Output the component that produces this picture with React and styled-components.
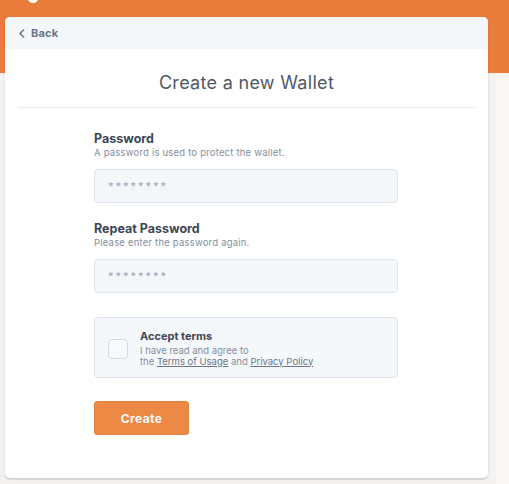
import styled, { createGlobalStyle } from 'styled-components';

const GlobalStyle = createGlobalStyle`
  html, body {
    margin: 0;
    padding: 0;
    background: #f6f4f2;
    font-family: Inter, "Noto Sans", sans-serif;
  }
`;

const Page = styled.div`
  position: relative;
  width: 509px;
  height: 484px;
  overflow: hidden;
  background: linear-gradient(to right, #f5f3f1 0, #f5f3f1 496px, #faf7f5 496px);
`;

const Banner = styled.div`
  height: 73px;
  background: #ea7c3b;
  position: relative;
`;

const LogoBit = styled.div`
  position: absolute;
  left: 28px;
  top: -6px;
  width: 10px;
  height: 9px;
  border-radius: 50%;
  background: #fff;
`;

const Card = styled.div`
  position: absolute;
  left: 5px;
  top: 17px;
  width: 483px;
  height: 461px;
  background: #fff;
  border-radius: 5px;
  box-shadow: 0 1px 3px rgba(0, 0, 0, 0.12), 0 2px 0 rgba(0, 0, 0, 0.06);
  overflow: hidden;
  display: flex;
  flex-direction: column;
`;

const TopBar = styled.div`
  height: 32px;
  flex-shrink: 0;
  background: #f4f7fa;
  display: flex;
  align-items: center;
  padding-left: 13px;
  gap: 5px;
  color: #6c7588;
  font-size: 11px;
  font-weight: 700;
  letter-spacing: 0.2px;
`;

const Title = styled.h1`
  margin: 0;
  height: 58px;
  flex-shrink: 0;
  display: flex;
  align-items: center;
  justify-content: center;
  font-size: 18px;
  font-weight: 400;
  color: #4f5868;
  letter-spacing: 0.3px;
  padding-top: 8px;
  box-sizing: border-box;
`;

const Divider = styled.hr`
  margin: 0 13px;
  border: none;
  border-top: 1px solid #e6e8eb;
`;

const Form = styled.div`
  width: 304px;
  margin-left: 89px;
  padding-top: 23px;
  display: flex;
  flex-direction: column;
`;

const Label = styled.div`
  font-size: 12.5px;
  font-weight: 700;
  color: #3e4656;
  line-height: 15px;
`;

const Help = styled.div`
  font-size: 9.5px;
  color: #858e9c;
  line-height: 13px;
  letter-spacing: 0.2px;
`;

const Input = styled.div`
  margin-top: 10px;
  margin-bottom: ${p => p.$mb || 0}px;
  height: 32px;
  border: 1px solid #dfe5ec;
  border-radius: 4px;
  background: #f4f7fa;
  display: flex;
  align-items: center;
  padding-left: 13px;
  color: #9ea6b2;
  font-size: 11px;
  letter-spacing: 2px;
`;

const Terms = styled.div`
  margin-top: 24px;
  height: 59px;
  border: 1px solid #dde3ea;
  border-radius: 4px;
  background: #f5f8fb;
  display: flex;
  align-items: center;
  padding-left: 13px;
  gap: 12px;
`;

const Check = styled.div`
  width: 18px;
  height: 18px;
  border: 1px solid #d2d9e1;
  border-radius: 4px;
  background: #f7f9fb;
  margin-top: 2px;
`;

const TermsText = styled.div`
  display: flex;
  flex-direction: column;
`;

const TermsTitle = styled.div`
  font-size: 11px;
  font-weight: 700;
  color: #3e4656;
  line-height: 14px;
`;

const TermsBody = styled.div`
  font-size: 9.5px;
  color: #858e9c;
  line-height: 11px;
  margin-top: 2px;
`;

const Link = styled.a`
  color: #6e7686;
  text-decoration: underline;
`;

const Button = styled.button`
  margin-top: 23px;
  width: 95px;
  height: 34px;
  border: 1px solid #e38341;
  border-radius: 3px;
  background: #ec8a45;
  color: #fff;
  font-family: inherit;
  font-size: 12px;
  font-weight: 700;
  letter-spacing: 0.4px;
`;

export default function App() {
  return (
    <>
      <GlobalStyle />
      <Page>
        <Banner>
          <LogoBit />
        </Banner>
        <Card>
          <TopBar>
            <svg width="8" height="9" viewBox="0 0 8 9" fill="none">
              <path d="M5.5 1L2 4.5L5.5 8" stroke="#6c7588" strokeWidth="1.6" strokeLinecap="round" strokeLinejoin="round" />
            </svg>
            Back
          </TopBar>
          <Title>Create a new Wallet</Title>
          <Divider />
          <Form>
            <Label>Password</Label>
            <Help>A password is used to protect the wallet.</Help>
            <Input $mb={18}>********</Input>
            <Label>Repeat Password</Label>
            <Help>Please enter the password again.</Help>
            <Input>********</Input>
            <Terms>
              <Check />
              <TermsText>
                <TermsTitle>Accept terms</TermsTitle>
                <TermsBody>
                  I have read and agree to
                  <br />
                  the <Link>Terms of Usage</Link> and <Link>Privacy Policy</Link>
                </TermsBody>
              </TermsText>
            </Terms>
            <Button>Create</Button>
          </Form>
        </Card>
      </Page>
    </>
  );
}
